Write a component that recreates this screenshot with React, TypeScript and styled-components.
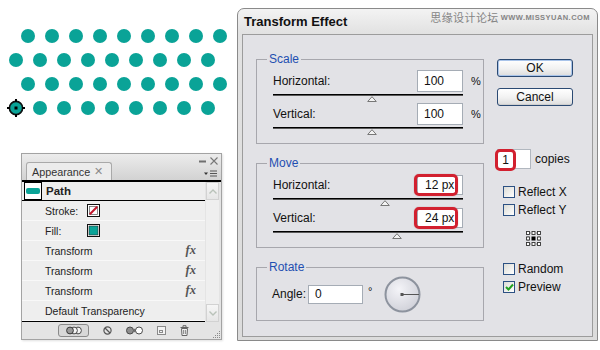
import React from "react";
import styled, { createGlobalStyle } from "styled-components";

const Global = createGlobalStyle`
  html, body { margin: 0; padding: 0; background: #ffffff; }
  body {
    width: 600px;
    height: 350px;
    overflow: hidden;
    font-family: "Liberation Sans", Arial, sans-serif;
    color: #111;
  }
`;

const TEAL = "#0aa397";

const Stage = styled.div`
  display: flex;
  width: 600px;
  height: 350px;
`;

/* ---------- artboard with the repeated dots ---------- */

const LeftColumn = styled.div`
  width: 237px;
  flex: none;
  display: flex;
  flex-direction: column;
`;

const DotField = styled.div`
  height: 153px;
  box-sizing: border-box;
  padding-top: 29px;
  display: flex;
  flex-direction: column;
  gap: 10px;
`;

const DotRow = styled.div<{ $indent: number }>`
  display: flex;
  gap: 10px;
  padding-left: ${(p) => p.$indent}px;
`;

const Dot = styled.span`
  position: relative;
  flex: none;
  width: 14px;
  height: 14px;
  border-radius: 50%;
  background: ${TEAL};
`;

const AnchorMark = styled.svg`
  position: absolute;
  left: -3px;
  top: -3px;
`;

const SelectedAnchor = () => (
  <AnchorMark width="20" height="20" viewBox="0 0 20 20">
    <circle cx="10" cy="10" r="6.6" fill={TEAL} stroke="#111" strokeWidth="1.6" />
    <rect x="8.5" y="8.5" width="3" height="3" fill="#000" />
    <rect x="9" y="1" width="2" height="3" fill="#000" />
    <rect x="9" y="16" width="2" height="3" fill="#000" />
    <rect x="1" y="9" width="3" height="2" fill="#000" />
    <rect x="16" y="9" width="3" height="2" fill="#000" />
  </AnchorMark>
);

/* ---------- Appearance panel ---------- */

const Panel = styled.section`
  margin-left: 21px;
  width: 201px;
  height: 187px;
  box-sizing: border-box;
  border: 1px solid #a3a3a3;
  background: #e4e4e4;
  display: flex;
  flex-direction: column;
  box-shadow: 1px 1px 2px rgba(0, 0, 0, 0.12);
`;

const PanelHead = styled.div`
  height: 26px;
  flex: none;
  display: flex;
  align-items: flex-end;
  justify-content: space-between;
  padding: 0 2px 0 4px;
  background: linear-gradient(#ececec, #d2d2d2);
  border-bottom: 2px solid #000;
`;

const Tab = styled.div`
  height: 17px;
  display: flex;
  align-items: center;
  gap: 4px;
  padding: 0 8px 0 5px;
  border: 1px solid #a9a9a9;
  border-bottom: none;
  border-radius: 3px 3px 0 0;
  background: #ececec;
  font-size: 10.8px;
  color: #333;
`;

const TabClose = styled.span`
  font-size: 11px;
  color: #8a8a8a;
`;

const HeadControls = styled.div`
  align-self: stretch;
  display: flex;
  flex-direction: column;
  align-items: flex-end;
  justify-content: space-between;
  padding: 3px 1px 3px 0;
`;

const ControlPair = styled.div`
  display: flex;
  align-items: center;
  gap: 4px;
`;

const PanelBody = styled.div`
  display: flex;
  flex: none;
`;

const LayerList = styled.div`
  width: 183px;
  display: flex;
  flex-direction: column;
  border-bottom: 1px solid #000;
`;

const Row = styled.div<{ $head?: boolean }>`
  height: ${(p) => (p.$head ? 18 : 20)}px;
  box-sizing: border-box;
  display: flex;
  align-items: center;
  padding: 0 9px 0 ${(p) => (p.$head ? 2 : 23)}px;
  background: #eeeeee;
  border-bottom: 1px solid ${(p) => (p.$head ? "#000" : "#f8f8f8")};
  font-size: 10.5px;
  color: #222;
  ${(p) => p.$head && "height: 19px; font-weight: bold; font-size: 11.5px; gap: 4px;"}
`;

const RowLabel = styled.span`
  width: 42px;
  flex: none;
`;

const RowName = styled.span`
  flex: 1;
`;

const Fx = styled.span`
  font-family: "Liberation Serif", "Times New Roman", serif;
  font-style: italic;
  font-weight: bold;
  font-size: 12.5px;
  color: #555;
`;

const ScrollColumn = styled.div`
  width: 13px;
  margin-left: 1px;
  display: flex;
  flex-direction: column;
  justify-content: space-between;
  background: #efefef;
`;

const ScrollButton = styled.div`
  height: 18px;
  box-sizing: border-box;
  border: 1px solid #d2d2d2;
  background: linear-gradient(#f6f6f6, #e6e6e6);
  display: flex;
  align-items: center;
  justify-content: center;
`;

const PanelFoot = styled.div`
  flex: 1;
  display: flex;
  align-items: center;
  padding-left: 36px;
  gap: 14px;
  position: relative;
`;

const Grip = styled.svg`
  margin-left: auto;
  margin-right: 1px;
  align-self: flex-end;
  margin-bottom: 1px;
`;

const Chevron = ({ up }: { up?: boolean }) => (
  <svg width="8" height="5" viewBox="0 0 8 5">
    <path
      d={up ? "M0.5 4.5 L4 1 L7.5 4.5" : "M0.5 0.5 L4 4 L7.5 0.5"}
      fill="none"
      stroke="#b9c2b9"
      strokeWidth="1.4"
    />
  </svg>
);

const PathIcon = () => (
  <svg width="18" height="18" viewBox="0 0 18 18">
    <rect x="0.5" y="0.5" width="17" height="17" fill="#fff" stroke="#000" />
    <rect x="2" y="6" width="14" height="6" rx="2" fill={TEAL} />
  </svg>
);

const StrokeSwatch = () => (
  <svg width="13" height="13" viewBox="0 0 13 13">
    <rect x="0.5" y="0.5" width="12" height="12" fill="#fff" stroke="#111" />
    <rect x="2.5" y="2.5" width="8" height="8" fill="#fff" stroke="#6a6a6a" strokeWidth="0.8" />
    <line x1="2.8" y1="10.2" x2="10.2" y2="2.8" stroke="#c3152c" strokeWidth="2" />
  </svg>
);

const FillSwatch = () => (
  <svg width="13" height="13" viewBox="0 0 13 13">
    <rect x="0.5" y="0.5" width="12" height="12" fill="#fff" stroke="#111" />
    <rect x="2" y="2" width="9" height="9" fill={TEAL} stroke="#2a2a2a" strokeWidth="0.6" />
  </svg>
);

/* ---------- Transform Effect dialog ---------- */

const Dialog = styled.div`
  position: relative;
  margin-top: 8px;
  width: 361px;
  height: 333px;
  box-sizing: border-box;
  border: 1px solid #8a8a8a;
  border-radius: 7px 7px 0 0;
  background: linear-gradient(#f3f3f3, #e2e2e2 24px, #dcdcdc);
  padding: 0 4px 3px 4px;
  display: flex;
  flex-direction: column;
`;

const TitleBar = styled.div`
  height: 25px;
  flex: none;
  display: flex;
  align-items: center;
  padding-left: 2px;
  font-size: 13px;
  font-weight: bold;
  color: #111;
`;

const Watermark = styled.div`
  position: absolute;
  top: 0px;
  right: 7px;
  display: flex;
  align-items: center;
  gap: 2px;
  color: #858585;
`;

const WatermarkCn = styled.span`
  font-family: "Noto Sans CJK SC", sans-serif;
  font-size: 11px;
  letter-spacing: 0.4px;
`;

const WatermarkUrl = styled.span`
  font-size: 7.5px;
  font-weight: bold;
  letter-spacing: 0.45px;
`;

const DialogBody = styled.div`
  flex: 1;
  display: flex;
  gap: 13px;
  padding: 17px 0 0 13px;
  border: 1px solid #9c9c9c;
  background: #e2e2e6;
`;

const Groups = styled.div`
  width: 228px;
  display: flex;
  flex-direction: column;
  gap: 12px;
`;

const Group = styled.fieldset`
  margin: 0;
  min-inline-size: 0;
  padding: 4px 0 7px 10px;
  border: 1px solid #a7a7ad;
  box-sizing: border-box;
  width: 228px;
`;

const GroupLabel = styled.legend`
  padding: 0 2px;
  font-size: 12px;
  line-height: 14px;
  color: #1f4fb1;
`;

const Field = styled.div`
  display: flex;
  flex-direction: column;
  padding-left: 6px;
`;

const FieldRow = styled.div`
  height: 22px;
  display: flex;
  align-items: center;
`;

const FieldLabel = styled.span`
  flex: 1;
  font-size: 12px;
  color: #111;
`;

const NumberBox = styled.div<{ $w: number; $h: number }>`
  position: relative;
  width: ${(p) => p.$w}px;
  height: ${(p) => p.$h}px;
  box-sizing: border-box;
  border: 1px solid #a5acb5;
  background: #fff;
  display: flex;
  align-items: center;
  padding-left: 6px;
  font-size: 12px;
`;

const Unit = styled.span`
  width: 20px;
  box-sizing: border-box;
  padding-left: 8px;
  font-size: 11px;
`;

const CallOut = styled.span<{ $w: number }>`
  position: absolute;
  left: -4px;
  top: -2px;
  width: ${(p) => p.$w}px;
  height: 22px;
  box-sizing: border-box;
  border: 3px solid #d2202f;
  border-radius: 5px;
  box-shadow: 0 0 1px rgba(120, 0, 0, 0.5);
`;

const CallOutText = styled.span`
  position: relative;
  background: #fff;
  padding: 0 1px;
`;

const Track = styled.div`
  margin-top: 2px;
  width: 190px;
  height: 2px;
  box-sizing: border-box;
  border-top: 1px solid #000;
  border-bottom: 1px solid #5a5a5a;
`;

const ThumbLane = styled.div`
  position: relative;
  width: 190px;
  height: 7px;
`;

const Thumb = styled.svg`
  position: absolute;
  top: 0;
  margin-left: -5px;
`;

const DialRow = styled.div`
  display: flex;
  align-items: center;
  height: 38px;
  padding-left: 5px;
  margin-top: -3px;
  font-size: 12px;
`;

const DialLabel = styled.span`
  width: 36px;
`;

const Degree = styled.span`
  margin: -6px 0 0 5px;
  font-size: 11px;
`;

const Dial = styled.svg`
  margin-left: 12px;
`;

const SideColumn = styled.div`
  width: 76px;
  display: flex;
  flex-direction: column;
  padding-top: 7px;
`;

const Button = styled.button<{ $primary?: boolean }>`
  height: 18px;
  padding: 0;
  border: 1px solid #2b4a73;
  border-radius: 3px;
  background: linear-gradient(#ffffff, #f1f1f1 55%, #dcdcdc);
  box-shadow: ${(p) => (p.$primary ? "inset 0 0 0 1px #a9c4ea" : "inset 0 -1px 0 #cfcfcf")};
  font-family: "Liberation Sans", Arial, sans-serif;
  font-size: 12px;
  color: #111;
  & + & {
    margin-top: 11px;
  }
`;

const CopiesRow = styled.div`
  margin: 42px 0 0 -2px;
  height: 21px;
  display: flex;
  align-items: center;
  font-size: 12px;
`;

const CopiesBox = styled.div`
  position: relative;
  width: 34px;
  height: 20px;
  box-sizing: border-box;
  margin-left: 2px;
  border: 1px solid #b1b7bf;
  background: #fff;
  margin-right: 4px;
`;

const CopiesCallOut = styled.span`
  position: absolute;
  left: -3px;
  top: -1px;
  width: 21px;
  height: 22px;
  box-sizing: border-box;
  border: 3px solid #d2202f;
  border-radius: 5px;
  display: flex;
  align-items: center;
  justify-content: center;
  font-size: 12px;
  background: #fff;
`;

const CheckRow = styled.label<{ $gap?: number }>`
  display: flex;
  align-items: center;
  gap: 3px;
  height: 18px;
  margin: ${(p) => p.$gap ?? 0}px 0 0 6px;
  font-size: 12px;
  color: #111;
`;

const Box = styled.span`
  width: 12px;
  height: 12px;
  box-sizing: border-box;
  border: 1px solid #2c5183;
  background: linear-gradient(135deg, #dcdcd6, #ffffff);
  display: flex;
  align-items: center;
  justify-content: center;
`;

const RefPoint = styled.svg`
  margin: 12px 0 0 29px;
`;

const Check = ({ label, checked, gap }: { label: string; checked?: boolean; gap?: number }) => (
  <CheckRow $gap={gap}>
    <Box>
      {checked && (
        <svg width="9" height="8" viewBox="0 0 9 8">
          <path d="M1 4 L3.5 6.5 L8 1.5" fill="none" stroke="#21a121" strokeWidth="2" />
        </svg>
      )}
    </Box>
    {label}
  </CheckRow>
);

type Slider = { label: string; value: string; unit?: string; pos: number; flagged?: boolean };

const SliderField = ({ s }: { s: Slider }) => (
  <Field>
    <FieldRow>
      <FieldLabel>{s.label}</FieldLabel>
      <NumberBox $w={46} $h={s.flagged ? 20 : 22}>
        {s.flagged ? (
          <>
            <CallOut $w={44} />
            <CallOutText>{s.value}</CallOutText>
          </>
        ) : (
          s.value
        )}
      </NumberBox>
      <Unit>{s.unit ?? ""}</Unit>
    </FieldRow>
    <Track />
    <ThumbLane>
      <Thumb width="10" height="6" viewBox="0 0 10 6" style={{ left: `${s.pos}%` }}>
        <path d="M5 0.7 L9.3 5.5 L0.7 5.5 Z" fill="#f3f3f3" stroke="#777" strokeWidth="1" />
      </Thumb>
    </ThumbLane>
  </Field>
);

const scale: Slider[] = [
  { label: "Horizontal:", value: "100", unit: "%", pos: 52 },
  { label: "Vertical:", value: "100", unit: "%", pos: 52 },
];

const move: Slider[] = [
  { label: "Horizontal:", value: "12 px", pos: 59, flagged: true },
  { label: "Vertical:", value: "24 px", pos: 65, flagged: true },
];

const dotRows = [
  { indent: 21, count: 9 },
  { indent: 9, count: 9 },
  { indent: 21, count: 9 },
  { indent: 9, count: 9 },
];

export default function App() {
  return (
    <>
      <Global />
      <Stage>
        <LeftColumn>
          <DotField>
            {dotRows.map((r, ri) => (
              <DotRow key={ri} $indent={r.indent}>
                {Array.from({ length: r.count }).map((_, i) => (
                  <Dot key={i}>{ri === 3 && i === 0 && <SelectedAnchor />}</Dot>
                ))}
              </DotRow>
            ))}
          </DotField>

          <Panel>
            <PanelHead>
              <Tab>
                Appearance <TabClose>✕</TabClose>
              </Tab>
              <HeadControls>
                <ControlPair>
                  <svg width="7" height="3" viewBox="0 0 7 3">
                    <rect x="0" y="0.5" width="7" height="2" fill="#6f6f6f" />
                  </svg>
                  <svg width="8" height="8" viewBox="0 0 8 8">
                    <path d="M0.5 0.5 L7.5 7.5 M7.5 0.5 L0.5 7.5" stroke="#777" strokeWidth="1.1" />
                  </svg>
                </ControlPair>
                <svg width="14" height="7" viewBox="0 0 14 7">
                  <path d="M0 2.5 L4 2.5 L2 5 Z" fill="#333" />
                  <path d="M6 1 H13 M6 3.5 H13 M6 6 H13" stroke="#555" strokeWidth="1" />
                </svg>
              </HeadControls>
            </PanelHead>

            <PanelBody>
              <LayerList>
                <Row $head>
                  <PathIcon />
                  Path
                </Row>
                <Row>
                  <RowLabel>Stroke:</RowLabel>
                  <StrokeSwatch />
                </Row>
                <Row>
                  <RowLabel>Fill:</RowLabel>
                  <FillSwatch />
                </Row>
                {["Transform", "Transform", "Transform"].map((t, i) => (
                  <Row key={i}>
                    <RowName>{t}</RowName>
                    <Fx>fx</Fx>
                  </Row>
                ))}
                <Row>
                  <RowName>Default Transparency</RowName>
                </Row>
              </LayerList>
              <ScrollColumn>
                <ScrollButton>
                  <Chevron up />
                </ScrollButton>
                <ScrollButton>
                  <Chevron />
                </ScrollButton>
              </ScrollColumn>
            </PanelBody>

            <PanelFoot>
              <svg width="31" height="13" viewBox="0 0 31 13">
                <rect x="0.5" y="0.5" width="30" height="12" rx="2.5" fill="#d8d8d8" stroke="#8a8a8a" />
                <circle cx="20" cy="6.5" r="3.4" fill="#f6f6f6" stroke="#4a4a4a" />
                <circle cx="16" cy="6.5" r="3.4" fill="#f6f6f6" stroke="#4a4a4a" />
                <circle cx="12" cy="6.5" r="3.4" fill="#9a9a9a" stroke="#3a3a3a" />
              </svg>
              <svg width="9" height="9" viewBox="0 0 9 9">
                <circle cx="4.5" cy="4.5" r="3.6" fill="none" stroke="#555" strokeWidth="1.2" />
                <line x1="2" y1="2" x2="7" y2="7" stroke="#555" strokeWidth="1.2" />
              </svg>
              <svg width="17" height="9" viewBox="0 0 17 9">
                <circle cx="4" cy="4.5" r="3.5" fill="#8e8e8e" stroke="#4a4a4a" />
                <path d="M8.3 2.6 L10.3 4.5 L8.3 6.4 Z" fill="#3a3a3a" />
                <circle cx="13" cy="4.5" r="3.5" fill="#fff" stroke="#4a4a4a" />
              </svg>
              <svg width="9" height="9" viewBox="0 0 9 9">
                <rect x="0.5" y="0.5" width="8" height="8" fill="#f3f3f3" stroke="#8a8a8a" />
                <rect x="2.5" y="4.5" width="3" height="2" fill="none" stroke="#8a8a8a" />
              </svg>
              <svg width="9" height="11" viewBox="0 0 9 11">
                <path d="M0.5 2.5 H8.5 M3 2.5 V0.7 H6 V2.5" stroke="#666" fill="none" />
                <path d="M1.5 3.5 H7.5 L7 10.5 H2 Z" fill="#f0f0f0" stroke="#666" />
                <path d="M3.6 5 V9 M5.4 5 V9" stroke="#888" />
              </svg>
              <Grip width="7" height="7" viewBox="0 0 7 7">
                {[
                  [6, 0],
                  [4, 2],
                  [6, 2],
                  [2, 4],
                  [4, 4],
                  [6, 4],
                  [0, 6],
                  [2, 6],
                  [4, 6],
                  [6, 6],
                ].map(([x, y], i) => (
                  <rect key={i} x={x} y={y} width="1" height="1" fill="#8a8a8a" />
                ))}
              </Grip>
            </PanelFoot>
          </Panel>
        </LeftColumn>

        <Dialog>
          <TitleBar>Transform Effect</TitleBar>
          <Watermark>
            <WatermarkCn>思缘设计论坛</WatermarkCn>
            <WatermarkUrl>WWW.MISSYUAN.COM</WatermarkUrl>
          </Watermark>
          <DialogBody>
            <Groups>
              <Group>
                <GroupLabel>Scale</GroupLabel>
                {scale.map((s) => (
                  <SliderField key={s.label} s={s} />
                ))}
              </Group>
              <Group>
                <GroupLabel>Move</GroupLabel>
                {move.map((s) => (
                  <SliderField key={s.label} s={s} />
                ))}
              </Group>
              <Group>
                <GroupLabel>Rotate</GroupLabel>
                <DialRow>
                  <DialLabel>Angle:</DialLabel>
                  <NumberBox $w={55} $h={19}>0</NumberBox>
                  <Degree>°</Degree>
                  <Dial width="37" height="37" viewBox="0 0 37 37">
                    <defs>
                      <radialGradient id="dialFace" cx="40%" cy="35%" r="70%">
                        <stop offset="0" stopColor="#f4f4f8" />
                        <stop offset="1" stopColor="#cfd0d8" />
                      </radialGradient>
                    </defs>
                    <circle cx="18.5" cy="18.5" r="17" fill="url(#dialFace)" stroke="#8d939e" strokeWidth="2" />
                    <rect x="16.5" y="17" width="3" height="3" fill="#555" />
                    <line x1="18" y1="18.5" x2="35" y2="18.5" stroke="#555" strokeWidth="1" />
                  </Dial>
                </DialRow>
              </Group>
            </Groups>

            <SideColumn>
              <Button $primary>OK</Button>
              <Button>Cancel</Button>
              <CopiesRow>
                <CopiesBox>
                  <CopiesCallOut>1</CopiesCallOut>
                </CopiesBox>
                copies
              </CopiesRow>
              <Check label="Reflect X" gap={14} />
              <Check label="Reflect Y" />
              <RefPoint width="15" height="15" viewBox="0 0 15 15">
                <path
                  d="M2 2 H13 V13 H2 Z"
                  fill="none"
                  stroke="#666"
                  strokeWidth="0.8"
                  strokeDasharray="1 1"
                />
                {[0, 5.5, 11].flatMap((y) =>
                  [0, 5.5, 11].map((x) =>
                    x === 5.5 && y === 5.5 ? (
                      <rect key={`${x}-${y}`} x={x} y={y} width="4" height="4" fill="#000" />
                    ) : (
                      <rect
                        key={`${x}-${y}`}
                        x={x + 0.5}
                        y={y + 0.5}
                        width="3"
                        height="3"
                        fill="#fff"
                        stroke="#333"
                        strokeWidth="0.9"
                      />
                    )
                  )
                )}
              </RefPoint>
              <Check label="Random" gap={14} />
              <Check label="Preview" checked />
            </SideColumn>
          </DialogBody>
        </Dialog>
      </Stage>
    </>
  );
}
